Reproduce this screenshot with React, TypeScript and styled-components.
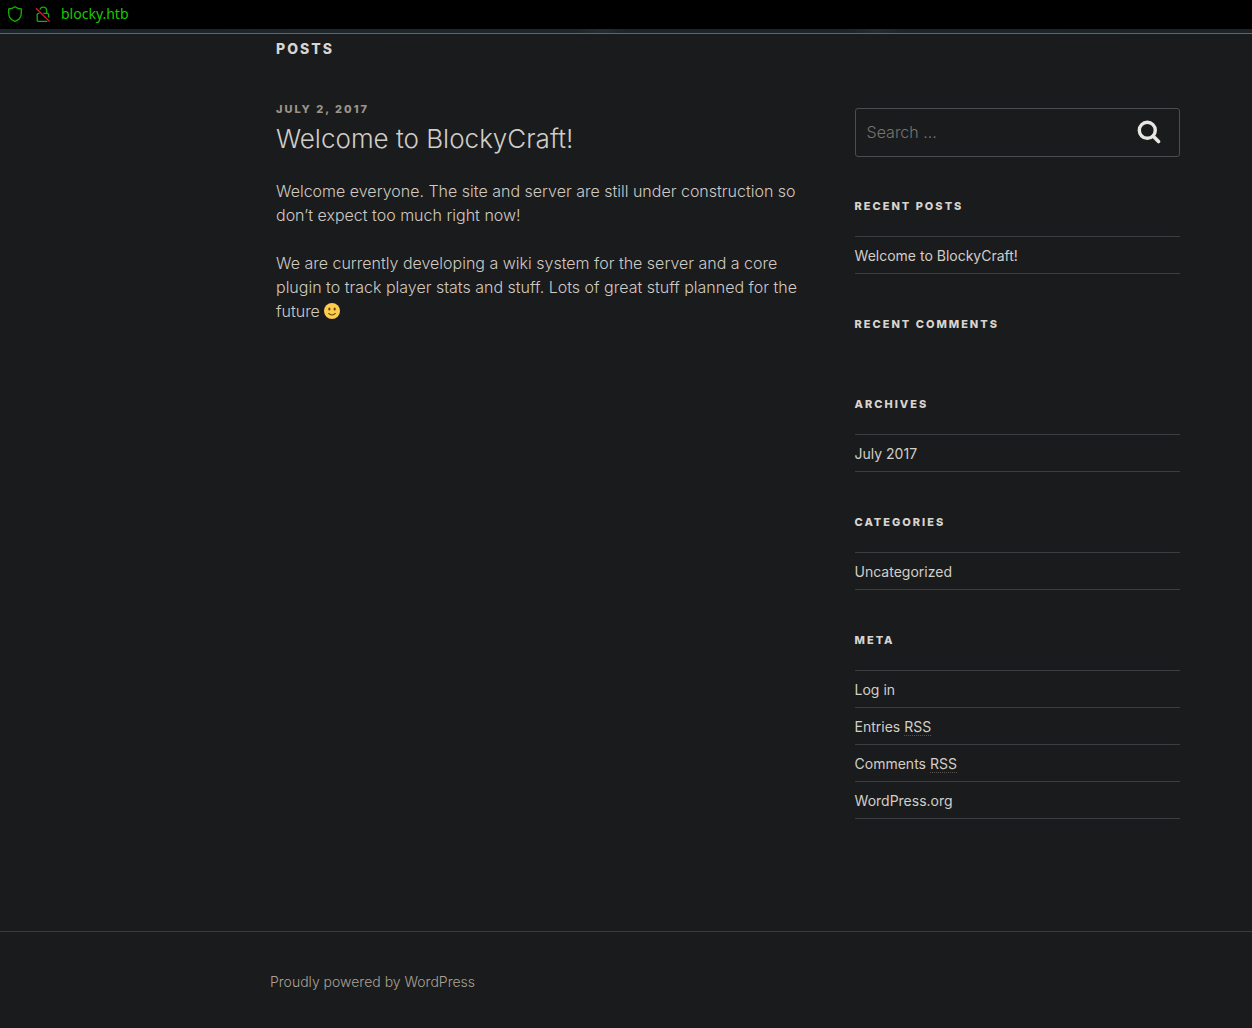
import React from "react";
import styled, { createGlobalStyle } from "styled-components";

const GlobalStyle = createGlobalStyle`
  *, *::before, *::after { box-sizing: border-box; }
  body {
    margin: 0;
    background: #1a1b1d;
    color: #cfcac3;
    font-family: Inter, "Liberation Sans", sans-serif;
    font-size: 16px;
    font-weight: 300;
    line-height: 24px;
  }
  h1, h2, h3, p, ul { margin: 0; padding: 0; }
  ul { list-style: none; }
  a { color: inherit; text-decoration: none; }
`;

const AddressBar = styled.header`
  display: flex;
  align-items: center;
  height: 29px;
  padding: 0 7px 2px;
  background: #000;
`;

const BarIcon = styled.svg`
  flex: none;
  width: 16px;
  height: 18px;
  margin-right: 12px;
`;

const AddressInput = styled.input`
  flex: 1;
  min-width: 0;
  padding: 0;
  margin-left: -2px;
  border: 0;
  outline: 0;
  background: transparent;
  color: #18c800;
  font-family: "Noto Sans", sans-serif;
  font-size: 14px;
  line-height: 20px;
`;

const HeaderImage = styled.div`
  height: 5px;
  background: linear-gradient(90deg, #1b242b, #1c272c 46%, #222d32 48%, #1b252b 50%, #1b252b 68%, #222d32 70%, #1b252b 72%, #1b2328);
  border-bottom: 1px solid #5d6765;
`;

const Content = styled.div`
  padding: 3px 72px 71px 276px;
`;

const PageTitle = styled.h1`
  color: #d8d4cf;
  font-size: 14px;
  font-weight: 800;
  letter-spacing: 2px;
  line-height: 24px;
  text-transform: uppercase;
`;

const Columns = styled.div`
  display: grid;
  grid-template-columns: minmax(0, 60fr) minmax(0, 36fr);
  column-gap: 4%;
  align-items: start;
  margin-top: 39px;
`;

const PostDate = styled.a`
  display: block;
  color: #9d9488;
  font-size: 11px;
  font-weight: 800;
  letter-spacing: 2px;
  line-height: 18px;
  text-transform: uppercase;
`;

const PostTitle = styled.h2`
  color: #d0ccc6;
  font-size: 26px;
  font-weight: 300;
  line-height: 36px;
  margin: 3px 0 22px;
`;

const Paragraph = styled.p`
  margin-bottom: 24px;
`;

const Smile = styled.svg`
  width: 16px;
  height: 16px;
  vertical-align: -2px;
`;

const Sidebar = styled.aside`
  padding-top: 8px;
`;

const SearchForm = styled.form`
  display: flex;
  height: 49px;
  margin-bottom: 40px;
  padding-bottom: 2px;
  border: 1px solid #4a4e50;
  border-radius: 3px;
`;

const SearchInput = styled.input`
  flex: 1;
  min-width: 0;
  padding: 0 11px;
  border: 0;
  outline: 0;
  background: transparent;
  color: #c8c3bc;
  font: inherit;
  &::placeholder { color: #77746f; opacity: 1; }
`;

const SearchButton = styled.button`
  display: grid;
  place-items: center;
  width: 60px;
  padding: 0;
  border: 0;
  background: transparent;
  color: #e8e6e3;
  cursor: pointer;
`;

const Widget = styled.section`
  padding-bottom: 41px;
`;

const WidgetTitle = styled.h2`
  margin-bottom: 21px;
  color: #d8d4cf;
  font-size: 11px;
  font-weight: 800;
  letter-spacing: 2px;
  line-height: 18px;
  text-transform: uppercase;
`;

const LinkList = styled.ul`
  border-top: 1px solid #3b3e40;
`;

const LinkRow = styled.li`
  padding: 8px 0 7px;
  border-bottom: 1px solid #3b3e40;
  color: #d2cec8;
  font-size: 14px;
  font-weight: 400;
  line-height: 21px;
`;

const Abbr = styled.abbr`
  border-bottom: 1px dotted #55524c;
  text-decoration: none;
`;

const Footer = styled.footer`
  padding: 38px 72px 34px 270px;
  border-top: 1px solid #393c3e;
  color: #aaa195;
  font-size: 14px;
`;

type Entry = { label: string; abbr?: string };

const widgets: { title: string; items: Entry[] }[] = [
  { title: "Recent Posts", items: [{ label: "Welcome to BlockyCraft!" }] },
  { title: "Recent Comments", items: [] },
  { title: "Archives", items: [{ label: "July 2017" }] },
  { title: "Categories", items: [{ label: "Uncategorized" }] },
  {
    title: "Meta",
    items: [
      { label: "Log in" },
      { label: "Entries ", abbr: "RSS" },
      { label: "Comments ", abbr: "RSS" },
      { label: "WordPress.org" },
    ],
  },
];

export default function App() {
  return (
    <>
      <GlobalStyle />
      <AddressBar>
        <BarIcon viewBox="0 0 16 18" fill="none" stroke="#18b000" strokeWidth="1.3" aria-hidden="true">
          <path d="M8 1.7C6.200 3 4 3.800 1.700 4v4.200c0 3.900 2.500 6.700 6.300 8.200 3.800-1.500 6.300-4.300 6.300-8.200V4C12 3.800 9.800 3 8 1.700Z" strokeLinejoin="round" />
        </BarIcon>
        <BarIcon viewBox="0 0 16 18" fill="none" stroke="#18b000" strokeWidth="1.3" aria-hidden="true">
          <path d="M4.900 4.500A3.500 3.500 0 0 1 11.700 5.500V8.300M8.500 8.400h3.900a1.200 1.200 0 0 1 1.200 1.200v2.800M4.500 8.400H3.400a1.200 1.200 0 0 0-1.200 1.200v5.600a1.200 1.200 0 0 0 1.200 1.200h9" />
          <path d="M1 3.200 14.700 16.600" stroke="#d81c38" />
        </BarIcon>
        <AddressInput aria-label="Address" defaultValue="blocky.htb" />
      </AddressBar>
      <HeaderImage />
      <Content>
        <PageTitle>Posts</PageTitle>
        <Columns>
          <main>
            <article>
              <PostDate href="#date">July 2, 2017</PostDate>
              <PostTitle>
                <a href="#post">Welcome to BlockyCraft!</a>
              </PostTitle>
              <Paragraph>
                Welcome everyone. The site and server are still under construction so don’t expect too much right now!
              </Paragraph>
              <Paragraph>
                We are currently developing a wiki system for the server and a core plugin to track player stats and
                stuff. Lots of great stuff planned for the future{" "}
                <Smile viewBox="0 0 36 36" role="img" aria-label="smile">
                  <circle cx="18" cy="18" r="18" fill="#ffcc4d" />
                  <ellipse cx="12" cy="13.5" rx="2.5" ry="3.5" fill="#664500" />
                  <ellipse cx="24" cy="13.5" rx="2.5" ry="3.5" fill="#664500" />
                  <path d="M10.5 23.5c4 4.500 11 4.500 15 0" fill="none" stroke="#664500" strokeWidth="2.4" strokeLinecap="round" />
                </Smile>
              </Paragraph>
            </article>
          </main>
          <Sidebar>
            <SearchForm role="search" onSubmit={(e) => e.preventDefault()}>
              <SearchInput type="search" aria-label="Search for:" placeholder="Search …" />
              <SearchButton type="submit" aria-label="Search">
                <svg width="24" height="24" viewBox="0 0 24 24" fill="none" stroke="currentColor" aria-hidden="true">
                  <circle cx="10.3" cy="10.3" r="8" strokeWidth="3.4" />
                  <path d="m16.3 16.3 5.200 5.200" strokeWidth="3.6" strokeLinecap="round" />
                </svg>
              </SearchButton>
            </SearchForm>
            {widgets.map((w) => (
              <Widget key={w.title}>
                <WidgetTitle>{w.title}</WidgetTitle>
                {w.items.length > 0 && (
                  <LinkList>
                    {w.items.map((item) => (
                      <LinkRow key={item.label}>
                        <a href="#item">
                          {item.label}
                          {item.abbr && <Abbr>{item.abbr}</Abbr>}
                        </a>
                      </LinkRow>
                    ))}
                  </LinkList>
                )}
              </Widget>
            ))}
          </Sidebar>
        </Columns>
      </Content>
      <Footer>
        <a href="#wordpress">Proudly powered by WordPress</a>
      </Footer>
    </>
  );
}
